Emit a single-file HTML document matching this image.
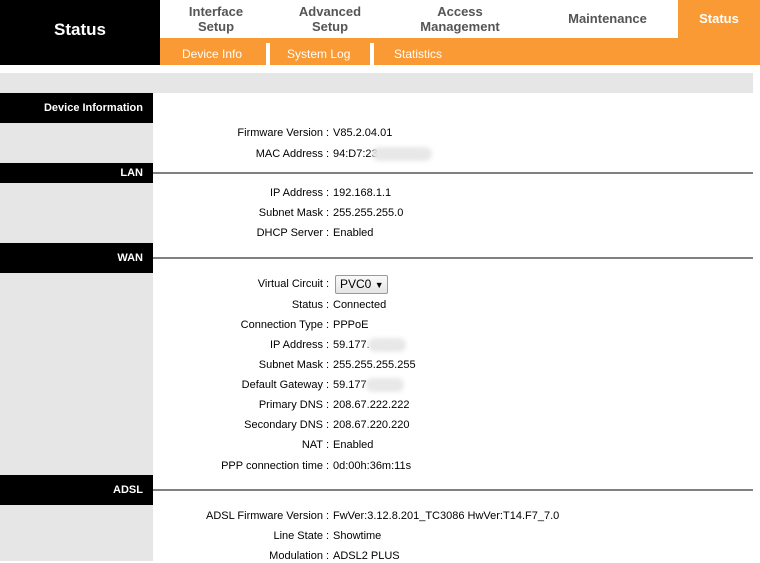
<!DOCTYPE html>
<html><head><style>
*{margin:0;padding:0;box-sizing:border-box}
body{width:760px;height:561px;overflow:hidden;background:#fff;font-family:"Liberation Sans",Arial,sans-serif;position:relative;color:#000}
.a{position:absolute}
.nav{color:#555;font-weight:bold;font-size:13px;text-align:center;line-height:15px}
.sub{color:#fff;font-size:12px;line-height:33px;top:38px}
.blk{position:absolute;left:0;width:153px;background:#000;color:#fff;font-weight:bold;font-size:11px;text-align:right;padding-right:10px}
.ln{position:absolute;left:153px;width:600px;height:2px;background:#808080}
.r{position:absolute;font-size:11px;line-height:14px;white-space:nowrap}
.l{right:437px;text-align:right}
.c{left:326px}
.v{left:333px}
.blur{position:absolute;height:14px;background:#e8e8e8;border-radius:7px;filter:blur(2px)}
</style></head><body>
<div class="a" style="left:0;top:0;width:160px;height:65px;background:#000;color:#fff;font-weight:bold;font-size:17px;text-align:center;line-height:60px">Status</div>
<div class="a" style="left:160px;top:38px;width:600px;height:27px;background:#f99a34"></div>
<div class="a" style="left:678px;top:0;width:82px;height:38px;background:#f99a34;color:#fff;font-weight:bold;font-size:13px;text-align:center;line-height:37px">Status</div>
<div class="a nav" style="left:176px;top:4px;width:80px">Interface<br>Setup</div>
<div class="a nav" style="left:290px;top:4px;width:80px">Advanced<br>Setup</div>
<div class="a nav" style="left:410px;top:4px;width:100px">Access<br>Management</div>
<div class="a nav" style="left:555px;top:11px;width:105px">Maintenance</div>
<div class="a sub" style="left:182px">Device Info</div>
<div class="a" style="left:266px;top:43px;width:4px;height:22px;background:#fff"></div>
<div class="a sub" style="left:287px">System Log</div>
<div class="a" style="left:370px;top:43px;width:4px;height:22px;background:#fff"></div>
<div class="a sub" style="left:394px">Statistics</div>
<div class="a" style="left:0;top:73px;width:753px;height:20px;background:#e6e6e6"></div>
<div class="a" style="left:0;top:93px;width:153px;height:468px;background:#e6e6e6"></div>
<div class="blk" style="top:93px;height:30px;line-height:30px">Device Information</div>
<div class="blk" style="top:163px;height:20px;line-height:20px">LAN</div><div class="ln" style="top:172px"></div>
<div class="blk" style="top:243px;height:30px;line-height:30px">WAN</div><div class="ln" style="top:257px"></div>
<div class="blk" style="top:475px;height:30px;line-height:30px">ADSL</div><div class="ln" style="top:489px"></div>

<div class="r l" style="top:126px">Firmware Version</div><div class="r c" style="top:126px">:</div><div class="r v" style="top:126px">V85.2.04.01</div>
<div class="r l" style="top:147px">MAC Address</div><div class="r c" style="top:147px">:</div><div class="r v" style="top:147px">94:D7:23</div><div class="blur" style="left:372px;top:147px;width:60px"></div>
<div class="r l" style="top:186px">IP Address</div><div class="r c" style="top:186px">:</div><div class="r v" style="top:186px">192.168.1.1</div>
<div class="r l" style="top:206px">Subnet Mask</div><div class="r c" style="top:206px">:</div><div class="r v" style="top:206px">255.255.255.0</div>
<div class="r l" style="top:226px">DHCP Server</div><div class="r c" style="top:226px">:</div><div class="r v" style="top:226px">Enabled</div>
<div class="r l" style="top:277px">Virtual Circuit</div><div class="r c" style="top:277px">:</div>
<div class="a" style="left:335px;top:275px;width:53px;height:19px;border:1px solid #999;border-radius:2px;background:linear-gradient(#fafafa,#e4e4e4);font-size:12px;line-height:17px;padding-left:4px;white-space:nowrap">PVC0 <span style="font-size:9px">&#9660;</span></div>
<div class="r l" style="top:298px">Status</div><div class="r c" style="top:298px">:</div><div class="r v" style="top:298px">Connected</div>
<div class="r l" style="top:318px">Connection Type</div><div class="r c" style="top:318px">:</div><div class="r v" style="top:318px">PPPoE</div>
<div class="r l" style="top:338px">IP Address</div><div class="r c" style="top:338px">:</div><div class="r v" style="top:338px">59.177.</div><div class="blur" style="left:368px;top:338px;width:38px"></div>
<div class="r l" style="top:358px">Subnet Mask</div><div class="r c" style="top:358px">:</div><div class="r v" style="top:358px">255.255.255.255</div>
<div class="r l" style="top:378px">Default Gateway</div><div class="r c" style="top:378px">:</div><div class="r v" style="top:378px">59.177</div><div class="blur" style="left:366px;top:378px;width:38px"></div>
<div class="r l" style="top:398px">Primary DNS</div><div class="r c" style="top:398px">:</div><div class="r v" style="top:398px">208.67.222.222</div>
<div class="r l" style="top:418px">Secondary DNS</div><div class="r c" style="top:418px">:</div><div class="r v" style="top:418px">208.67.220.220</div>
<div class="r l" style="top:438px">NAT</div><div class="r c" style="top:438px">:</div><div class="r v" style="top:438px">Enabled</div>
<div class="r l" style="top:459px">PPP connection time</div><div class="r c" style="top:459px">:</div><div class="r v" style="top:459px">0d:00h:36m:11s</div>
<div class="r l" style="top:509px">ADSL Firmware Version</div><div class="r c" style="top:509px">:</div><div class="r v" style="top:509px">FwVer:3.12.8.201_TC3086 HwVer:T14.F7_7.0</div>
<div class="r l" style="top:529px">Line State</div><div class="r c" style="top:529px">:</div><div class="r v" style="top:529px">Showtime</div>
<div class="r l" style="top:549px">Modulation</div><div class="r c" style="top:549px">:</div><div class="r v" style="top:549px">ADSL2 PLUS</div>
</body></html>
